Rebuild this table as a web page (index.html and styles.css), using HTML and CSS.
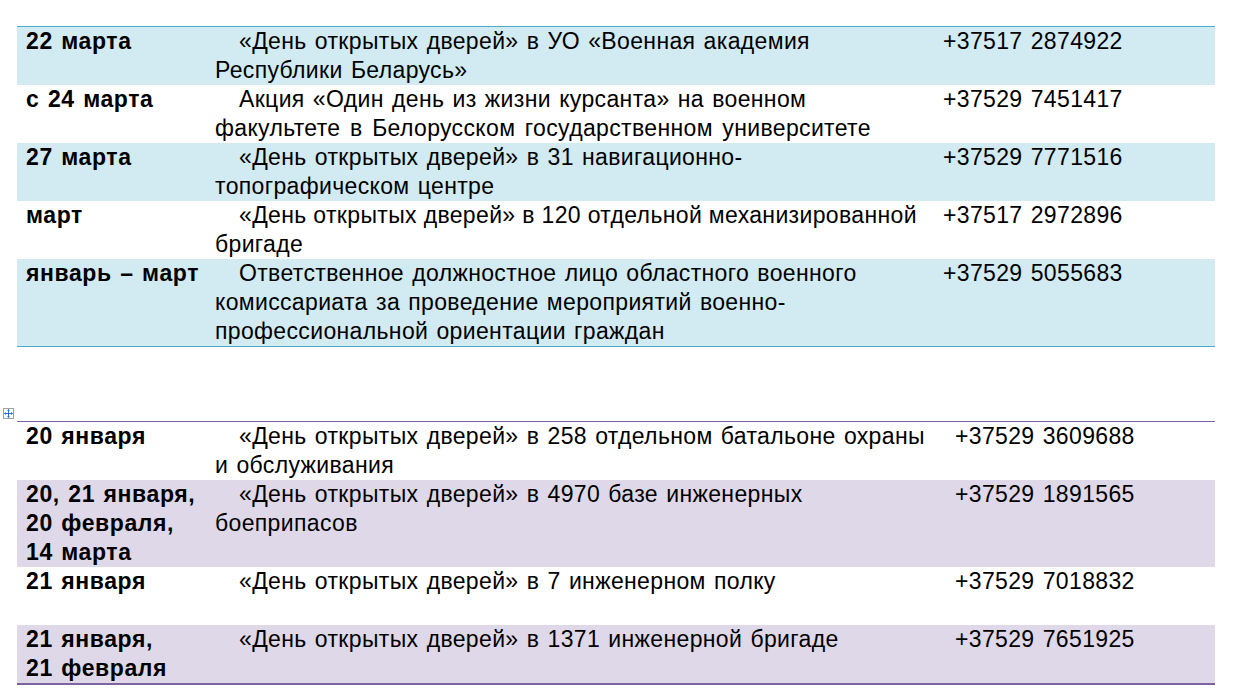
FILE: index.html
```html
<!DOCTYPE html>
<html lang="ru">
<head>
<meta charset="utf-8">
<title>Мероприятия</title>
<link rel="stylesheet" href="styles.css">
</head>
<body>
<div class="page">
  <table class="tbl tbl-blue">
    <colgroup><col class="c1"><col class="c2"><col class="c3"></colgroup>
    <tr class="shade">
      <td class="date">22 марта</td>
      <td class="desc">«День открытых дверей» в УО «Военная академия<br>Республики Беларусь»</td>
      <td class="phone">+37517 2874922</td>
    </tr>
    <tr>
      <td class="date">с 24 марта</td>
      <td class="desc">Акция «Один день из жизни курсанта» на военном<br><span class="wide">факультете в Белорусском государственном университете</span></td>
      <td class="phone">+37529 7451417</td>
    </tr>
    <tr class="shade">
      <td class="date">27 марта</td>
      <td class="desc">«День открытых дверей» в 31 навигационно-<br>топографическом центре</td>
      <td class="phone">+37529 7771516</td>
    </tr>
    <tr>
      <td class="date">март</td>
      <td class="desc tight">«День открытых дверей» в 120 отдельной механизированной<br>бригаде</td>
      <td class="phone">+37517 2972896</td>
    </tr>
    <tr class="shade">
      <td class="date">январь – март</td>
      <td class="desc">Ответственное должностное лицо областного военного<br>комиссариата за проведение мероприятий военно-<br>профессиональной ориентации граждан</td>
      <td class="phone">+37529 5055683</td>
    </tr>
  </table>

  <div class="tbl-wrap">
    <span class="move-handle" aria-hidden="true">
      <svg width="9" height="9" viewBox="0 0 9 9">
        <path d="M4.5 0.5 L4.5 8.5 M0.5 4.5 L8.5 4.5" stroke="#2a6fd6" stroke-width="1" fill="none"/>
        <path d="M4.5 0 L3 1.8 L6 1.8 Z M4.5 9 L3 7.2 L6 7.2 Z M0 4.5 L1.8 3 L1.8 6 Z M9 4.5 L7.2 3 L7.2 6 Z" fill="#2a6fd6"/>
      </svg>
    </span>
    <table class="tbl tbl-purple">
      <colgroup><col class="c1"><col class="c2b"><col class="c3"></colgroup>
      <tr>
        <td class="date">20 января</td>
        <td class="desc">«День открытых дверей» в 258 отдельном батальоне охраны<br>и обслуживания</td>
        <td class="phone">+37529 3609688</td>
      </tr>
      <tr class="shade">
        <td class="date">20, 21 января,<br>20 февраля,<br>14 марта</td>
        <td class="desc">«День открытых дверей» в 4970 базе инженерных<br>боеприпасов</td>
        <td class="phone">+37529 1891565</td>
      </tr>
      <tr>
        <td class="date">21 января</td>
        <td class="desc">«День открытых дверей» в 7 инженерном полку</td>
        <td class="phone">+37529 7018832</td>
      </tr>
      <tr class="shade">
        <td class="date">21 января,<br>21 февраля</td>
        <td class="desc">«День открытых дверей» в 1371 инженерной бригаде</td>
        <td class="phone">+37529 7651925</td>
      </tr>
    </table>
    <span class="resize-handle" aria-hidden="true"></span>
  </div>
</div>
</body>
</html>
```

FILE: styles.css
```css
html, body {
  margin: 0;
  padding: 0;
  background: #ffffff;
}

.page {
  padding: 26px 0 0 17px;
  font-family: "Liberation Sans", Arial, sans-serif;
  font-size: 23px;
  line-height: 29px;
  letter-spacing: 0.35px;
  word-spacing: 1.5px;
  color: #000000;
}

.tbl {
  border-collapse: collapse;
  table-layout: fixed;
  width: 1198px;
}

.tbl td {
  padding: 0 0 0 9px;
  vertical-align: top;
  white-space: nowrap;
  height: 58px;
}

.c1 { width: 189px; }
.c2 { width: 728px; }
.c2b { width: 740px; }
.c3 { width: auto; }

.date {
  font-weight: bold;
  letter-spacing: 0.6px;
}

.desc {
  text-indent: 24px;
}

.tight {
  letter-spacing: 0.35px;
  word-spacing: 0;
}

.wide {
  word-spacing: 2.8px;
}

.tbl-blue {
  border-top: 1px solid #4bacc6;
  border-bottom: 1px solid #4bacc6;
}

.tbl-blue .shade td {
  background: #d2eaf1;
}

.tbl-wrap {
  position: relative;
  margin-top: 74px;
  width: 1198px;
}

.tbl-purple {
  border-top: 1px solid #8064a2;
  border-bottom: 2px solid #8064a2;
}

.tbl-purple .shade td {
  background: #dfd8e8;
}

.move-handle {
  position: absolute;
  left: -14px;
  top: -13px;
  width: 9px;
  height: 9px;
  border: 1px solid #a0a0a0;
  background: #ffffff;
  display: flex;
  align-items: center;
  justify-content: center;
}

.move-handle svg {
  display: block;
}

.resize-handle {
  position: absolute;
  right: -17px;
  bottom: -9px;
  width: 5px;
  height: 5px;
  border: 1px solid #7f7f7f;
  background: #ffffff;
}
```
